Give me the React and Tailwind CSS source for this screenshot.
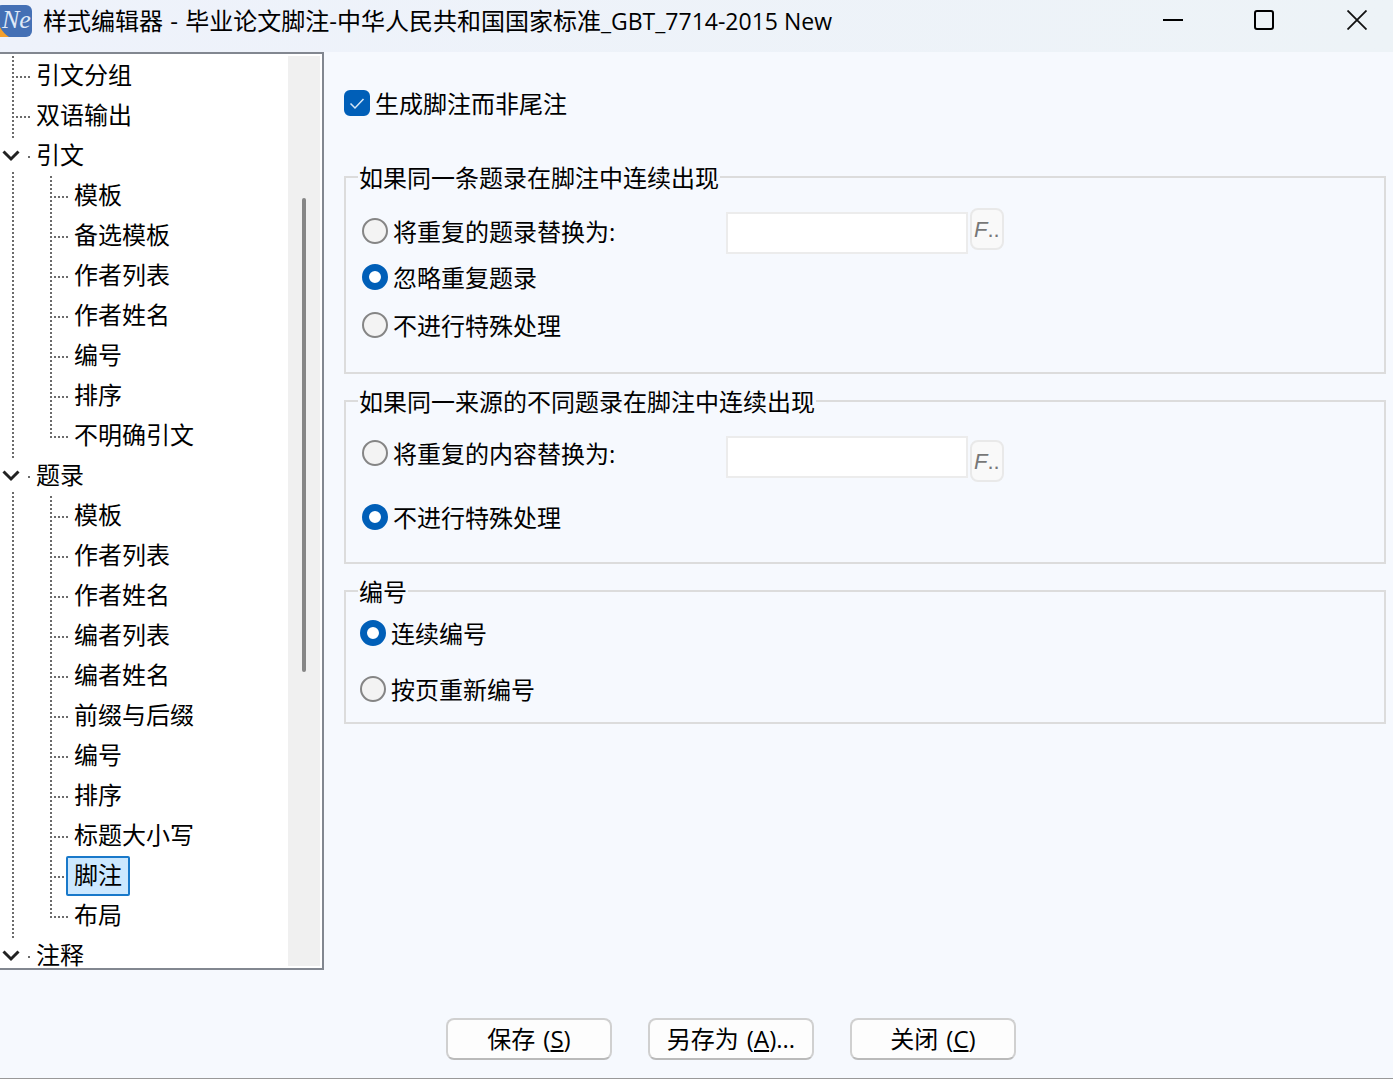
import React, { useState } from "react";

const treeItems = [
  { label: "引文分组", level: 1 },
  { label: "双语输出", level: 1 },
  { label: "引文", level: 0 },
  { label: "模板", level: 2 },
  { label: "备选模板", level: 2 },
  { label: "作者列表", level: 2 },
  { label: "作者姓名", level: 2 },
  { label: "编号", level: 2 },
  { label: "排序", level: 2 },
  { label: "不明确引文", level: 2, last: true },
  { label: "题录", level: 0 },
  { label: "模板", level: 2 },
  { label: "作者列表", level: 2 },
  { label: "作者姓名", level: 2 },
  { label: "编者列表", level: 2 },
  { label: "编者姓名", level: 2 },
  { label: "前缀与后缀", level: 2 },
  { label: "编号", level: 2 },
  { label: "排序", level: 2 },
  { label: "标题大小写", level: 2 },
  { label: "脚注", level: 2 },
  { label: "布局", level: 2, last: true },
  { label: "注释", level: 0 },
];

const vLine =
  "w-0.5 shrink-0 bg-[repeating-linear-gradient(to_bottom,#6b6b6b_0_2px,transparent_2px_4px)]";
const hLine =
  "h-0.5 shrink-0 bg-[repeating-linear-gradient(to_right,#6b6b6b_0_2px,transparent_2px_4px)]";

function TreeRow({ item, selected, onSelect }) {
  return (
    <li className="flex h-10 shrink-0 items-center">
      {item.level === 0 ? (
        <>
          {/* Expander */}
          <div className="flex w-7 shrink-0 flex-col self-stretch">
            <div className={`${vLine} ml-3 h-0.5`} />
            <svg
              className="mt-3 ml-0.5 h-3 w-[18px]"
              viewBox="0 0 18 12"
              fill="none"
              stroke="#222"
              strokeWidth="3"
            >
              <path d="M1.5 1.5 L9 9 L16.5 1.5" />
            </svg>
            <div className={`${vLine} mt-auto ml-3 h-1`} />
          </div>
          <div className={`${hLine} mt-0.5 w-0.5`} />
        </>
      ) : (
        <>
          <div className={`${vLine} ml-3 self-stretch`} />
          {item.level === 2 && (
            <div
              className={`${vLine} ml-9 self-start ${item.last ? "h-[22px]" : "h-10"}`}
            />
          )}
          <div className={`${hLine} mt-0.5 ml-0.5 w-3.5`} />
        </>
      )}
      <button
        type="button"
        onClick={onSelect}
        className={`-ml-0.5 flex h-10 items-start rounded-xs border-2 px-1.5 leading-[34px] whitespace-nowrap ${
          selected ? "border-[#1979ca] bg-[#cce8ff]" : "border-transparent"
        }`}
      >
        {item.label}
      </button>
    </li>
  );
}

function Radio({ name, label, checked, onChange, className = "" }) {
  return (
    <label className={`flex h-[26px] items-center gap-[5px] ${className}`}>
      <input
        type="radio"
        name={name}
        checked={checked}
        onChange={onChange}
        className="size-[26px] shrink-0 appearance-none rounded-full border-2 border-[#858585] bg-[#f3f3f3] checked:border-[7px] checked:border-[#005fb8] checked:bg-white"
      />
      <span className="pt-0.5 whitespace-nowrap">{label}</span>
    </label>
  );
}

function Group({ title, className, children }) {
  return (
    <fieldset className={`min-w-0 border-2 border-[#dcdcdc] px-3 ${className}`}>
      <legend className="h-7 pr-px pl-px leading-[30px]">{title}</legend>
      {children}
    </fieldset>
  );
}

function ReplaceInput({ label }) {
  return (
    <input
      type="text"
      aria-label={label}
      disabled
      className="h-[42px] w-[242px] border-2 border-[#ececec] bg-white px-2"
    />
  );
}

function FormatButton({ className = "" }) {
  return (
    <button
      type="button"
      disabled
      className={`ml-0.5 h-[42px] w-[34px] rounded-lg border-2 border-[#e9e9e9] bg-[#f9f9f9] pt-0.5 pl-0.5 text-left font-['Liberation_Sans',sans-serif] text-[22px] leading-9 text-[#777] ${className}`}
    >
      <i>F</i>..
    </button>
  );
}

function FooterButton({ text, hotkey, suffix = "" }) {
  return (
    <button
      type="button"
      className="h-[42px] w-[166px] rounded-lg border-2 border-[#d0d0d0] border-b-[#bababa] bg-[#fdfdfd] leading-9 whitespace-nowrap"
    >
      {text}
      <span className="ml-2">
        (<u className="underline-offset-2">{hotkey}</u>){suffix}
      </span>
    </button>
  );
}

function App() {
  const [selected, setSelected] = useState(20);
  const [footnote, setFootnote] = useState(true);
  const [sameItem, setSameItem] = useState("ignore");
  const [sameSource, setSameSource] = useState("none");
  const [numbering, setNumbering] = useState("continuous");

  return (
    <div className="flex h-screen flex-col border-b border-[#999] bg-[#f6f9fe] font-['Open_Sans','Noto_Sans_CJK_SC',sans-serif] text-2xl text-black">
      {/* Title bar */}
      <header className="flex h-[52px] shrink-0 items-start bg-linear-to-r from-[#eef2fb] to-[#edf3f7]">
        <svg className="mt-[5px] h-8 w-8 shrink-0" viewBox="0 0 32 32">
          <rect x="-4" width="36" height="32" rx="6" fill="#4470b5" />
          <path d="M0 22 Q3 28 9 32 H0 Z" fill="#f5a02c" />
          <text
            x="2"
            y="23"
            fontSize="26"
            fontStyle="italic"
            fontFamily="Liberation Serif, serif"
            fill="#dfe9f8"
          >
            Ne
          </text>
        </svg>
        <h1 className="ml-[11px] h-11 flex-1 truncate leading-[42px]">
          样式编辑器 <span className="mx-px">-</span>{" "}
          毕业论文脚注-中华人民共和国国家标准
          <span className="text-[23px]">_GBT_7714-2015 New</span>
        </h1>
        <div className="flex h-10 items-center">
          <button type="button" aria-label="最小化" className="px-[35px]">
            <svg width="20" height="20" viewBox="0 0 20 20">
              <path d="M0 10 H20" stroke="#000" strokeWidth="2" />
            </svg>
          </button>
          <button type="button" aria-label="最大化" className="px-9">
            <svg width="20" height="20" viewBox="0 0 20 20">
              <rect
                x="1"
                y="1"
                width="18"
                height="18"
                rx="2"
                fill="none"
                stroke="#000"
                strokeWidth="2"
              />
            </svg>
          </button>
          <button type="button" aria-label="关闭" className="pr-[26px] pl-[37px]">
            <svg width="20" height="20" viewBox="0 0 20 20">
              <path
                d="M0.5 0.5 L19.5 19.5 M19.5 0.5 L0.5 19.5"
                stroke="#111"
                strokeWidth="1.8"
              />
            </svg>
          </button>
        </div>
      </header>

      <div className="flex min-h-0 flex-1">
        {/* Tree */}
        <nav className="flex w-[324px] shrink-0 border-2 border-l-0 border-[#828790] bg-white pr-0.5">
          <ul className="flex flex-1 flex-col overflow-x-hidden overflow-y-clip pt-0.5">
            {treeItems.map((item, i) => (
              <TreeRow
                key={i}
                item={item}
                selected={selected === i}
                onSelect={() => setSelected(i)}
              />
            ))}
          </ul>
          <div className="my-0.5 flex w-8 flex-col items-center bg-[#f0f0f0] pt-[142px]">
            <div className="h-[474px] w-1 rounded-xs bg-[#868686]" />
          </div>
        </nav>

        {/* Settings */}
        <main className="min-w-0 flex-1 pt-[38px] pr-[7px] pl-5">
          <label className="flex h-[26px] items-center gap-[5px]">
            <span className="grid shrink-0">
              <input
                type="checkbox"
                checked={footnote}
                onChange={() => setFootnote(!footnote)}
                className="col-start-1 row-start-1 size-[26px] appearance-none rounded-md border-2 border-[#858585] bg-white checked:border-[#005fb8] checked:bg-[#005fb8]"
              />
              {footnote && (
                <svg
                  className="pointer-events-none col-start-1 row-start-1 size-[26px]"
                  viewBox="0 0 26 26"
                  fill="none"
                  stroke="#d5e6f6"
                  strokeWidth="1.5"
                >
                  <path d="M6.5 13.5 L11 18 L19.5 9" />
                </svg>
              )}
            </span>
            <span className="pt-0.5">生成脚注而非尾注</span>
          </label>

          <Group title="如果同一条题录在脚注中连续出现" className="mt-[47px] pt-[17px] pb-[34px]">
            <div className="flex items-start">
              <Radio
                name="sameItem"
                label="将重复的题录替换为:"
                checked={sameItem === "replace"}
                onChange={() => setSameItem("replace")}
                className="mt-2.5 w-[368px] pl-1"
              />
              <div className="mt-1">
                <ReplaceInput label="重复题录替换内容" />
              </div>
              <FormatButton />
            </div>
            <Radio
              name="sameItem"
              label="忽略重复题录"
              checked={sameItem === "ignore"}
              onChange={() => setSameItem("ignore")}
              className="mt-2.5 pl-1"
            />
            <Radio
              name="sameItem"
              label="不进行特殊处理"
              checked={sameItem === "none"}
              onChange={() => setSameItem("none")}
              className="mt-[22px] pl-1"
            />
          </Group>

          <Group title="如果同一来源的不同题录在脚注中连续出现" className="mt-[13px] pt-[21px] pb-8">
            <div className="flex items-start">
              <Radio
                name="sameSource"
                label="将重复的内容替换为:"
                checked={sameSource === "replace"}
                onChange={() => setSameSource("replace")}
                className="mt-1 w-[368px] pl-1"
              />
              <ReplaceInput label="重复内容替换内容" />
              <FormatButton className="mt-1" />
            </div>
            <Radio
              name="sameSource"
              label="不进行特殊处理"
              checked={sameSource === "none"}
              onChange={() => setSameSource("none")}
              className="mt-[22px] pl-1"
            />
          </Group>

          <Group title="编号" className="mt-[13px] pt-[15px] pb-5">
            <Radio
              name="numbering"
              label="连续编号"
              checked={numbering === "continuous"}
              onChange={() => setNumbering("continuous")}
              className="pl-0.5"
            />
            <Radio
              name="numbering"
              label="按页重新编号"
              checked={numbering === "page"}
              onChange={() => setNumbering("page")}
              className="mt-[30px] pl-0.5"
            />
          </Group>
        </main>
      </div>

      <footer className="flex shrink-0 justify-center gap-9 pt-12 pb-[18px] pl-[69px]">
        <FooterButton text="保存" hotkey="S" />
        <FooterButton text="另存为" hotkey="A" suffix="..." />
        <FooterButton text="关闭" hotkey="C" />
      </footer>
    </div>
  );
}

export default App;
